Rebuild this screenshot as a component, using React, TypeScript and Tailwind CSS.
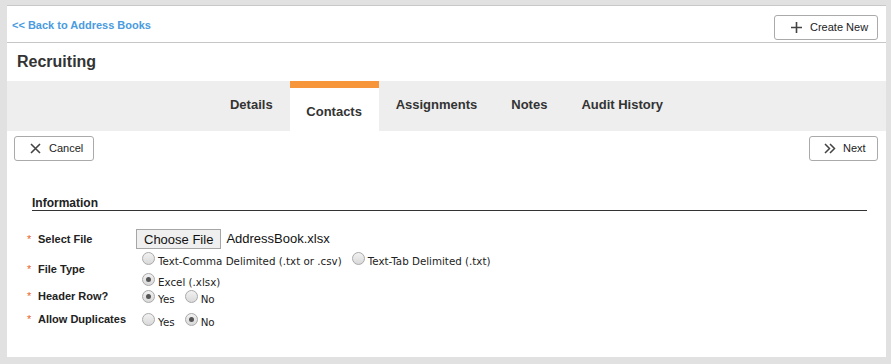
import React from 'react';

function Radio({ checked }: { checked?: boolean }) {
  return (
    <span className="inline-flex h-[13px] w-[13px] shrink-0 items-center justify-center rounded-full border border-[#a9a9a9] bg-gradient-to-b from-[#f2f2f2] to-[#d9d9d9]">
      {checked && <span className="h-[5px] w-[5px] rounded-full bg-[#555]" />}
    </span>
  );
}

function Option({ label, checked }: { label: string; checked?: boolean }) {
  return (
    <label className="mr-[10px] inline-flex h-[13px] items-center gap-[3px]">
      <Radio checked={checked} />
      <span className="translate-y-[3px] whitespace-nowrap font-['DejaVu_Sans',sans-serif] text-[10.3px] leading-[13px] text-[#222]">{label}</span>
    </label>
  );
}

function Req({ label }: { label: string }) {
  return (
    <div className="flex w-[109px] shrink-0 items-center">
      <span className="w-[11px] text-[11px] text-[#e8652b]">*</span>
      <span className="text-[11px] font-bold text-[#222]">{label}</span>
    </div>
  );
}

export default function App() {
  const tabs = ['Details', 'Contacts', 'Assignments', 'Notes', 'Audit History'];
  return (
    <div className="h-[364px] w-[891px] bg-[#e1e1e1] pl-[7px] pr-[5px] pt-[5px] font-['Liberation_Sans',Arial,sans-serif]">
      <div className="h-[352px] border-t border-[#c8c8c8] bg-white">
        <div className="flex h-[37px] items-start justify-between border-b border-[#c6c6c6] pl-[5px] pr-[8px]">
          <a className="mt-[11px] text-[11px] font-bold text-[#4a9be0]">&lt;&lt; Back to Address Books</a>
          <button className="mt-[9px] flex h-[25px] w-[104px] items-center gap-[8px] rounded-[3px] border border-[#aaa] bg-white pl-[16px] text-[11px] text-[#222]">
            <svg width="11" height="11" viewBox="0 0 11 11"><path d="M5.5 0v11M0 5.5h11" stroke="#444" strokeWidth="1.6" /></svg>
            Create New
          </button>
        </div>
        <div className="flex h-[38px] items-center pl-[10px] text-[16px] font-bold text-[#333]">Recruiting</div>
        <div className="flex h-[50px] justify-center bg-[#eeeeee]">
          {tabs.map((t) =>
            t === 'Contacts' ? (
              <div key={t} className="flex w-[89px] flex-col bg-white">
                <div className="h-[7px] bg-[#f7953a]" />
                <div className="flex flex-1 items-center justify-center pb-[2px] pt-[6px] text-[13px] font-bold text-[#333]">{t}</div>
              </div>
            ) : (
              <div key={t} className="flex items-center px-[17px] pb-[2px] text-[13px] font-bold text-[#333]">{t}</div>
            )
          )}
        </div>
        <div className="flex justify-between pl-[7px] pr-[8px] pt-[5px]">
          <button className="flex h-[25px] w-[80px] items-center gap-[8px] rounded-[3px] border border-[#aaa] bg-white pl-[15px] text-[11px] text-[#222]">
            <svg width="11" height="11" viewBox="0 0 11 11"><path d="M1 1l9 9M10 1l-9 9" stroke="#444" strokeWidth="1.6" /></svg>
            Cancel
          </button>
          <button className="flex h-[25px] w-[69px] items-center gap-[7px] rounded-[3px] border border-[#aaa] bg-white pl-[14px] text-[11px] text-[#222]">
            <svg width="12" height="11" viewBox="0 0 12 11"><path d="M1 1l4.5 4.5L1 10M6 1l4.5 4.5L6 10" stroke="#444" strokeWidth="1.5" fill="none" /></svg>
            Next
          </button>
        </div>
        <div className="pl-[20px] pr-[19px] pt-[35px]">
          <div className="ml-[5px] border-b border-[#333] text-[12px] font-bold leading-[14px] text-[#222]">Information</div>
          <div className="mt-[18px] flex h-[20px] items-center">
            <Req label="Select File" />
            <button className="h-[20px] border border-[#a6a6a6] bg-[#efefef] px-[7px] text-[13px] leading-none text-[#111]">Choose File</button>
            <span className="ml-[5px] text-[13px] text-[#111]">AddressBook.xlsx</span>
          </div>
          <div className="mt-[3px] flex items-center">
            <Req label="File Type" />
            <div className="ml-[6px] flex flex-col gap-[8px]">
              <div className="flex">
                <Option label="Text-Comma Delimited (.txt or .csv)" />
                <Option label="Text-Tab Delimited (.txt)" />
              </div>
              <div className="flex">
                <Option label="Excel (.xlsx)" checked />
              </div>
            </div>
          </div>
          <div className="mt-[4px] flex h-[13px] items-center">
            <Req label="Header Row?" />
            <div className="ml-[6px] flex">
              <Option label="Yes" checked />
              <Option label="No" />
            </div>
          </div>
          <div className="mt-[10px] flex h-[13px] items-center">
            <Req label="Allow Duplicates" />
            <div className="ml-[6px] flex">
              <Option label="Yes" />
              <Option label="No" checked />
            </div>
          </div>
        </div>
      </div>
    </div>
  );
}
